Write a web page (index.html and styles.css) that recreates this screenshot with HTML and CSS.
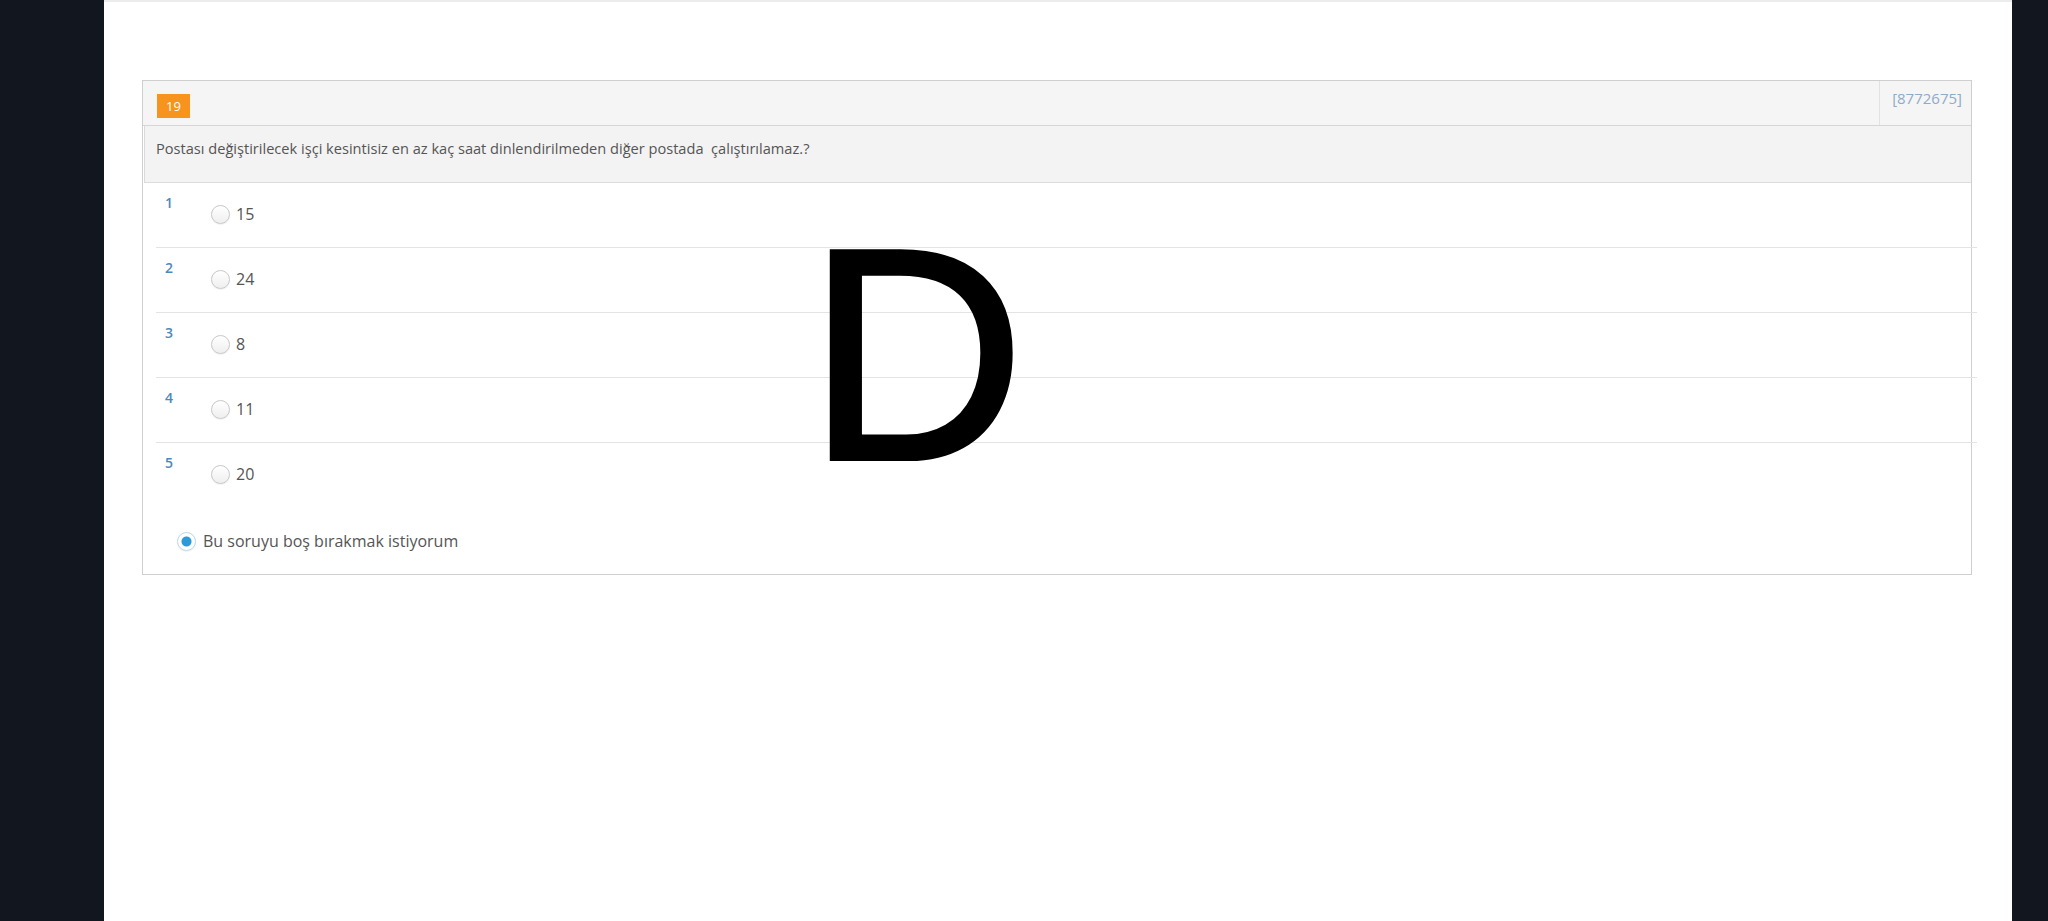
FILE: index.html
```html
<!DOCTYPE html>
<html lang="tr">
<head>
<meta charset="utf-8">
<title>Soru 19</title>
<link rel="stylesheet" href="styles.css">
</head>
<body>
<div class="frame">
  <div class="page">
    <div class="card">
      <div class="card-head">
        <span class="badge">19</span>
        <span class="qid">[8772675]</span>
      </div>
      <div class="question">Postası değiştirilecek işçi kesintisiz en az kaç saat dinlendirilmeden diğer postada&nbsp; çalıştırılamaz.?</div>
      <div class="answers">
        <div class="row"><span class="num">1</span><span class="opt"><span class="radio"></span><span class="label">15</span></span></div>
        <div class="row"><span class="num">2</span><span class="opt"><span class="radio"></span><span class="label">24</span></span></div>
        <div class="row"><span class="num">3</span><span class="opt"><span class="radio"></span><span class="label">8</span></span></div>
        <div class="row"><span class="num">4</span><span class="opt"><span class="radio"></span><span class="label">11</span></span></div>
        <div class="row last"><span class="num">5</span><span class="opt"><span class="radio"></span><span class="label">20</span></span></div>
      </div>
      <div class="skip"><span class="radio checked"></span><span class="skip-label">Bu soruyu boş bırakmak istiyorum</span></div>
    </div>
    <div class="big-letter">D</div>
  </div>
</div>
</body>
</html>
```

FILE: styles.css
```css
html, body {
  margin: 0;
  padding: 0;
  height: 100%;
}
body {
  background: #12161e;
  font-family: "Open Sans", "Noto Sans", sans-serif;
}
.frame {
  display: flex;
  height: 921px;
  padding-left: 104px;
  padding-right: 36px;
}
.page {
  position: relative;
  flex: 1;
  background: #ffffff;
  border-top: 2px solid #ececec;
  padding: 78px 40px 0 38px;
}
.card {
  border: 1px solid #cfcfcf;
  background: #fff;
  padding-bottom: 23px;
}
.card-head {
  display: flex;
  align-items: flex-start;
  justify-content: space-between;
  height: 44px;
  background: #f5f5f5;
  border-bottom: 1px solid #d6d6d6;
}
.badge {
  margin: 13px 0 0 14px;
  width: 33px;
  height: 24px;
  background: #f7941d;
  color: #fff;
  font-size: 13px;
  line-height: 24px;
  text-align: center;
}
.qid {
  height: 44px;
  border-left: 1px solid #e2e2e2;
  padding: 0 9px 0 12px;
  color: #8eabc8;
  font-size: 15px;
  line-height: 34px;
}
.question {
  margin-left: 1px;
  height: 57px;
  box-sizing: border-box;
  background: #f3f3f3;
  border-left: 1px solid #dadada;
  border-bottom: 1px solid #dcdcdc;
  padding: 12px 0 0 11px;
  color: #555;
  font-size: 14.6px;
  line-height: 20px;
}
.answers {
  margin: 0 -6px 0 13px;
}
.row {
  display: flex;
  align-items: flex-start;
  height: 65px;
  box-sizing: border-box;
  padding: 11px 0 0 9px;
  border-bottom: 1px solid #e3e3e3;
}
.row.last {
  border-bottom: none;
}
.num {
  width: 46px;
  color: #4f88bb;
  font-size: 14px;
  font-weight: 600;
  line-height: 18px;
}
.opt {
  display: flex;
  align-items: center;
  gap: 6px;
  margin-top: 10px;
}
.radio {
  width: 19px;
  height: 19px;
  box-sizing: border-box;
  border-radius: 50%;
  border: 1px solid #c8c8c8;
  background: linear-gradient(#ffffff, #efefef);
  box-shadow: 0 1px 1px rgba(0,0,0,0.06);
}
.label {
  color: #555;
  font-size: 16px;
  line-height: 20px;
}
.skip {
  display: flex;
  align-items: center;
  gap: 7px;
  margin: 23px 0 0 34px;
}
.radio.checked {
  border: 1px solid #b9d6ea;
  background: radial-gradient(circle, #2d9ad6 0 4.5px, #ffffff 5.5px);
}
.skip-label {
  color: #555;
  font-size: 16px;
  line-height: 20px;
}
.big-letter {
  position: absolute;
  left: 703px;
  top: 202px;
  font-family: "Liberation Sans", Arial, sans-serif;
  font-size: 302px;
  line-height: 1;
  color: #000;
  -webkit-text-stroke: 4px #000;
}
```
